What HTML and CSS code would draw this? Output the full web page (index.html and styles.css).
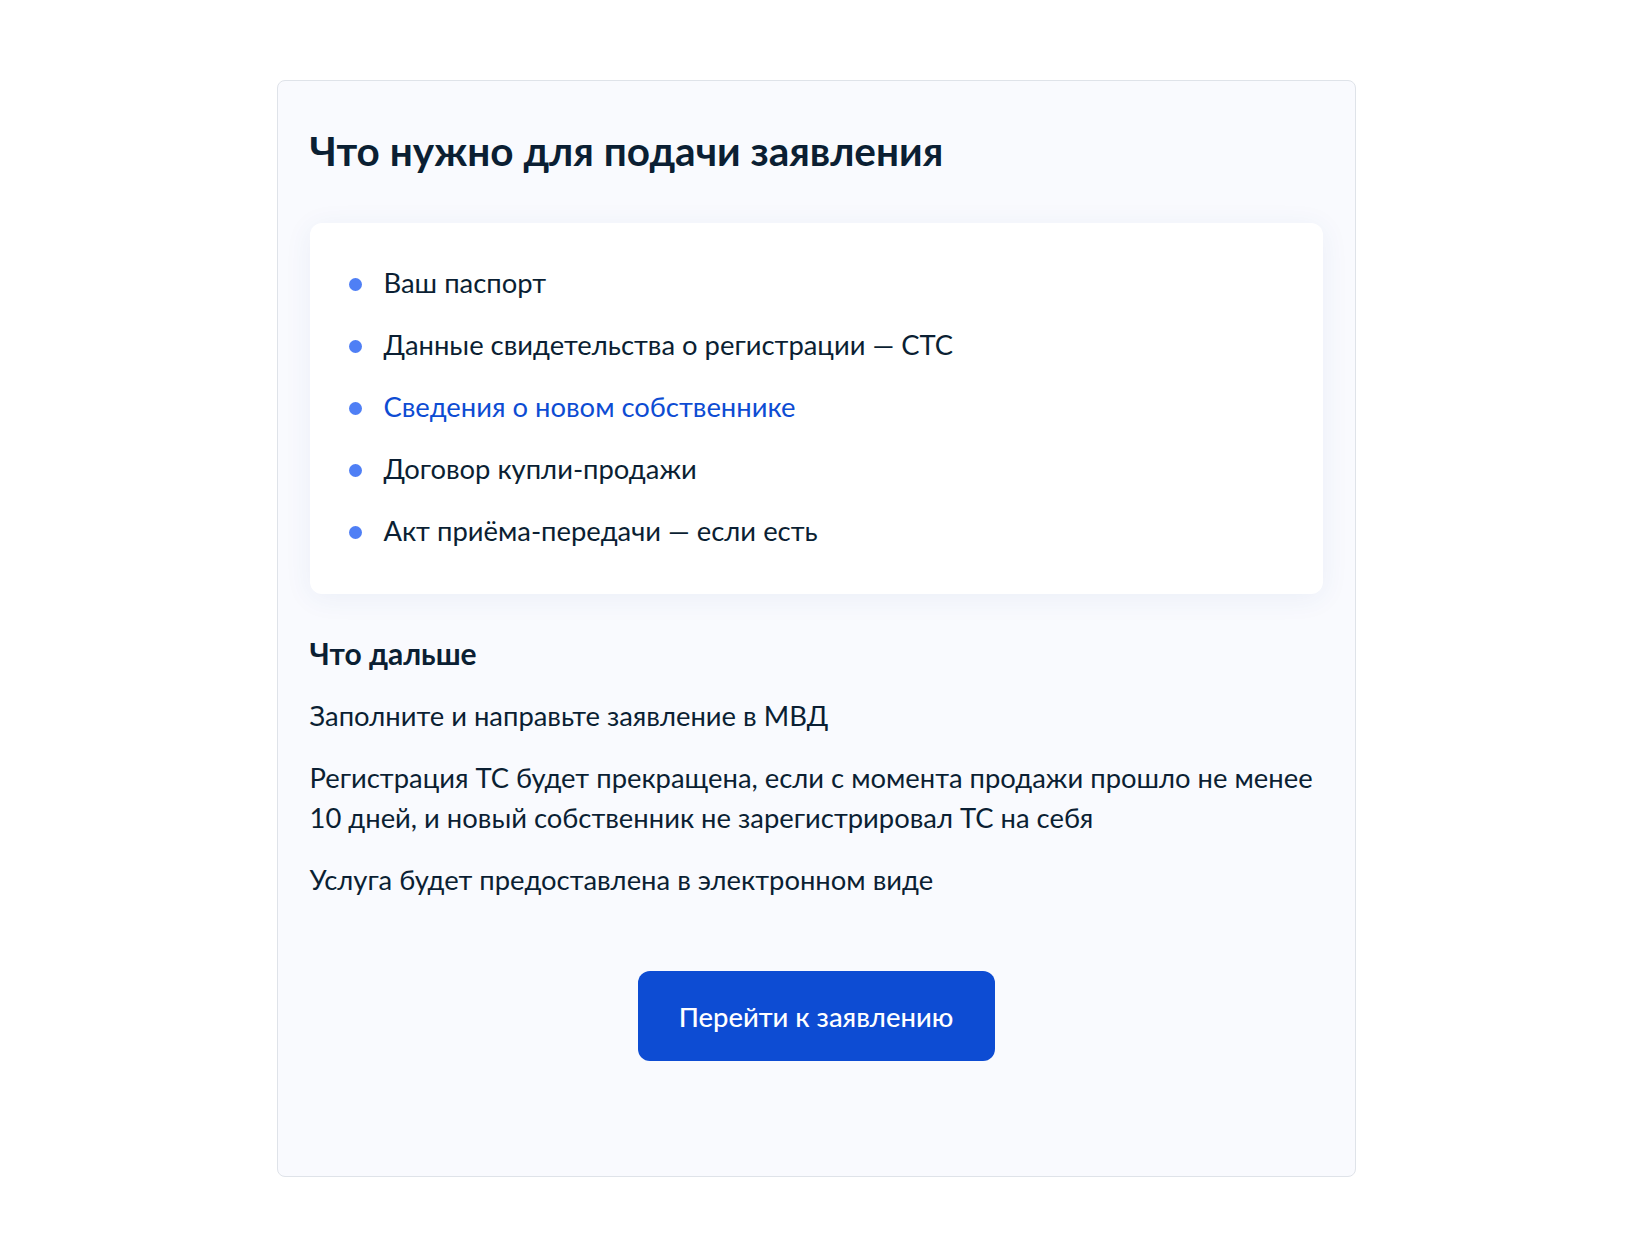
FILE: index.html
```html
<!DOCTYPE html>
<html lang="ru">
<head>
<meta charset="utf-8">
<title>Что нужно для подачи заявления</title>
<link rel="stylesheet" href="styles.css">
</head>
<body>
<main class="page">
  <section class="card">
    <h1 class="card-title">Что нужно для подачи заявления</h1>
    <div class="docs">
      <ul class="docs-list">
        <li class="docs-item">Ваш паспорт</li>
        <li class="docs-item">Данные свидетельства о регистрации — СТС</li>
        <li class="docs-item"><a class="docs-link" href="#">Сведения о новом собственнике</a></li>
        <li class="docs-item">Договор купли-продажи</li>
        <li class="docs-item">Акт приёма-передачи — если есть</li>
      </ul>
    </div>
    <h2 class="next-title">Что дальше</h2>
    <p class="next-text first">Заполните и направьте заявление в МВД</p>
    <p class="next-text">Регистрация ТС будет прекращена, если с момента продажи прошло не менее 10 дней, и новый собственник не зарегистрировал ТС на себя</p>
    <p class="next-text">Услуга будет предоставлена в электронном виде</p>
    <div class="actions">
      <button class="btn-primary" type="button">Перейти к заявлению</button>
    </div>
  </section>
</main>
</body>
</html>
```

FILE: styles.css
```css
* {
  box-sizing: border-box;
}

html, body {
  margin: 0;
  padding: 0;
  background: #ffffff;
}

body {
  font-family: Lato, "Noto Sans", "Liberation Sans", sans-serif;
  color: #0b1f33;
}

.page {
  display: flex;
  justify-content: center;
  padding-top: 80px;
  padding-bottom: 80px;
}

.card {
  width: 1079px;
  background: #f9fafe;
  border: 1px solid #dfe3e9;
  border-radius: 8px;
  padding: 45px 32px 115px 32px;
}

.card-title {
  margin: 0;
  font-size: 40.5px;
  line-height: 50px;
  font-weight: 700;
  color: #0b1f33;
}

.docs {
  margin-top: 47px;
  background: #ffffff;
  border-radius: 12px;
  box-shadow: 0 4px 28px rgba(40, 80, 160, 0.07);
  padding: 40px 40px 43px 39px;
}

.docs-list {
  list-style: none;
  margin: 0;
  padding: 0;
  display: flex;
  flex-direction: column;
  gap: 22px;
}

.docs-item {
  display: flex;
  align-items: center;
  gap: 22px;
  font-size: 27.4px;
  line-height: 40px;
}

.docs-item::before {
  content: "";
  flex: none;
  width: 13px;
  height: 13px;
  border-radius: 50%;
  background: #4f7ff5;
  margin-top: 3px;
}

.docs-link {
  color: #0d4cd3;
  text-decoration: none;
}

.next-title {
  margin: 39px 0 0 0;
  font-size: 30px;
  line-height: 40px;
  font-weight: 700;
}

.next-text {
  margin: 22px 0 0 0;
  font-size: 27.4px;
  line-height: 40px;
}

.next-text.first {
  margin-top: 23px;
}

.actions {
  display: flex;
  justify-content: center;
  margin-top: 71px;
}

.btn-primary {
  width: 357px;
  height: 90px;
  border: none;
  border-radius: 12px;
  background: #0d4cd3;
  color: #ffffff;
  font-family: Lato, "Noto Sans", "Liberation Sans", sans-serif;
  font-size: 27.4px;
  font-weight: 500;
  cursor: pointer;
}
```
